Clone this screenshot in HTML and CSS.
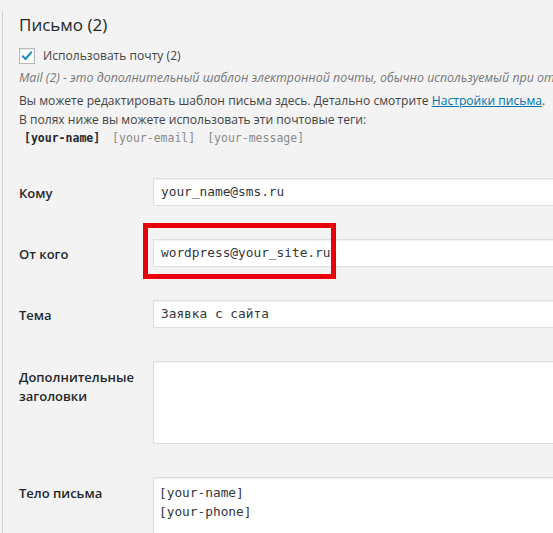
FILE: index.html
```html
<!DOCTYPE html>
<html lang="ru">
<head>
<meta charset="utf-8">
<link rel="stylesheet" href="styles.css">
</head>
<body>
<div class="wrap">
  <h2 class="title">Письмо (2)</h2>
  <label class="check-row">
    <span class="checkbox"><svg viewBox="0 0 16 16" width="16" height="16"><path d="M3.2 8.3 L6.4 11.4 L12.8 3.8" fill="none" stroke="#1e8cbe" stroke-width="2.4" stroke-linecap="round" stroke-linejoin="round"/></svg></span>
    <span>Использовать почту (2)</span>
  </label>
  <p class="note">Mail (2) - это дополнительный шаблон электронной почты, обычно используемый при отправке автоответов.</p>
  <p class="text">Вы можете редактировать шаблон письма здесь. Детально смотрите <a href="#" class="link">Настройки письма</a>.<br>В полях ниже вы можете использовать эти почтовые теги:</p>
  <p class="tags"><span class="tag used">[your-name]</span> <span class="tag">[your-email]</span> <span class="tag">[your-message]</span></p>

  <div class="form">
    <div class="row">
      <div class="label">Кому</div>
      <div class="field"><div class="input">your_name@sms.ru</div></div>
    </div>
    <div class="row">
      <div class="label">От кого</div>
      <div class="field highlight-host"><div class="input">wordpress@your_site.ru</div><span class="highlight"></span></div>
    </div>
    <div class="row">
      <div class="label">Тема</div>
      <div class="field"><div class="input">Заявка с сайта</div></div>
    </div>
    <div class="row">
      <div class="label label-tall">Дополнительные<br>заголовки</div>
      <div class="field"><div class="textarea small"></div></div>
    </div>
    <div class="row">
      <div class="label label-tall2">Тело письма</div>
      <div class="field"><div class="textarea big">[your-name]<br>[your-phone]</div></div>
    </div>
  </div>
</div>
</body>
</html>
```
FILE: styles.css
```css
html, body {
  margin: 0;
  padding: 0;
  background: #f3f3f3;
  overflow: hidden;
  height: 533px;
}
body {
  font-family: "Open Sans", "Noto Sans", sans-serif;
  color: #444;
  font-size: 12.1px;
}
.wrap {
  margin-left: 2px;
  border-left: 1px solid #cfcfcf;
  padding-left: 16px;
  min-height: 533px;
  width: 800px;
}
.title {
  margin: 11px 0 0;
  font-size: 17px;
  line-height: 27px;
  font-weight: 400;
  color: #23282d;
}
.check-row {
  margin-top: 8px;
  display: flex;
  align-items: center;
  height: 20px;
  line-height: 20px;
  color: #444;
}
.checkbox {
  width: 14px;
  height: 14px;
  border: 1px solid #b4b9be;
  background: #fff;
  box-shadow: inset 0 1px 2px rgba(0,0,0,.1);
  margin-right: 8px;
  display: flex;
  align-items: center;
  justify-content: center;
}
.checkbox svg { display: block; }
.note {
  margin: 2px 0 0;
  line-height: 19px;
  font-style: italic;
  font-size: 12.4px;
  color: #767676;
  white-space: nowrap;
}
.text {
  margin: 4px 0 0;
  line-height: 19px;
  white-space: nowrap;
}
.link {
  color: #0073aa;
  text-decoration: underline;
}
.tags {
  margin: 0;
  line-height: 19px;
  padding-left: 5px;
  font-family: "DejaVu Sans Mono", "Liberation Mono", monospace;
  font-size: 11.5px;
  color: #8a8a8a;
  white-space: nowrap;
}
.tag { margin-right: 5px; }
.tag.used {
  color: #23282d;
  font-weight: 700;
}
.form {
  margin-top: 14px;
}
.row {
  display: flex;
  padding: 16px 0 17px;
}
.label {
  width: 134px;
  flex: none;
  font-weight: 600;
  font-size: 13px;
  line-height: 19px;
  color: #23282d;
  padding-top: 6px;
}
.label-tall { padding-top: 7px; }
.label-tall2 { padding-top: 7px; }
.field {
  flex: none;
  width: 600px;
}
.highlight-host { position: relative; }
.input, .textarea {
  box-sizing: border-box;
  background: #fff;
  border: 1px solid #ddd;
  box-shadow: inset 0 1px 2px rgba(0,0,0,.07);
  font-family: "DejaVu Sans Mono", "Liberation Mono", monospace;
  font-size: 12.8px;
  color: #32373c;
  width: 600px;
}
.input {
  height: 28px;
  line-height: 26px;
  padding: 0 7px;
}
.textarea {
  padding: 5px 5px;
  line-height: 19px;
}
.textarea.small { height: 83px; }
.textarea.big { height: 120px; padding-top: 5px; }
.highlight {
  position: absolute;
  left: -10px;
  top: -16px;
  width: 183px;
  height: 46px;
  border: 5px solid #e8000b;
  pointer-events: none;
}
```
